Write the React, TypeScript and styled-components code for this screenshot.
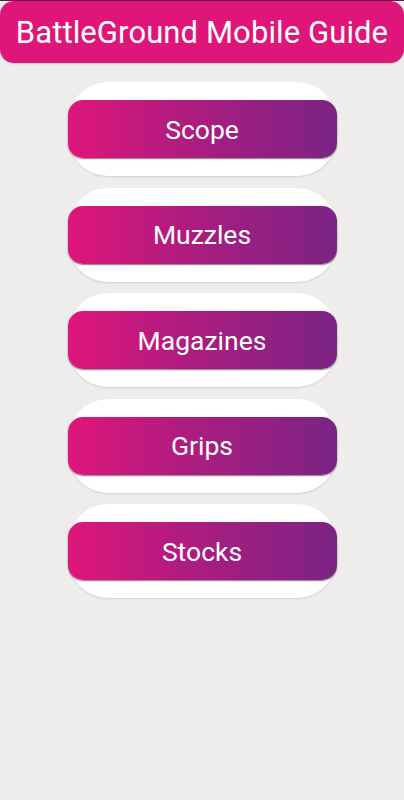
import React from "react";
import styled, { createGlobalStyle } from "styled-components";

const GlobalStyle = createGlobalStyle`
  html, body {
    margin: 0;
    padding: 0;
    background: #eeedeb;
  }
  body {
    font-family: Roboto, "Noto Sans", Arial, sans-serif;
  }
`;

const Page = styled.div`
  width: 404px;
  min-height: 800px;
  background: #eeedeb;
  border-top: 1px solid #6b1447;
  box-sizing: border-box;
  display: flex;
  flex-direction: column;
`;

const Header = styled.header`
  height: 62px;
  background: #e0157a;
  border-radius: 14px;
  display: flex;
  align-items: center;
  justify-content: center;
  box-shadow: 0 1px 2px rgba(0, 0, 0, 0.15);
`;

const Title = styled.h1`
  margin: 0;
  color: #ffffff;
  font-family: Roboto, sans-serif;
  font-weight: 400;
  font-size: 31px;
  letter-spacing: 0.1px;
`;

const List = styled.div`
  display: flex;
  flex-direction: column;
  align-items: center;
  gap: 11.5px;
  padding-top: 19px;
`;

const Card = styled.div`
  width: 269px;
  height: 94px;
  background: #ffffff;
  border-radius: 40px;
  display: flex;
  align-items: center;
  box-shadow: 0 1px 2px rgba(0, 0, 0, 0.12);
`;

const GradientButton = styled.button`
  width: 100%;
  height: 58px;
  border: none;
  border-radius: 15px;
  background: linear-gradient(90deg, #e0157a 0%, #a81d80 50%, #7a2484 100%);
  color: #ffffff;
  font-family: Roboto, sans-serif;
  font-size: 26.5px;
  font-weight: 400;
  padding: 0;
  display: flex;
  align-items: center;
  justify-content: center;
  box-shadow: 0 1px 1.5px rgba(40, 0, 30, 0.55);
  cursor: pointer;
`;

const items = ["Scope", "Muzzles", "Magazines", "Grips", "Stocks"];

export default function App() {
  return (
    <>
      <GlobalStyle />
      <Page>
        <Header>
          <Title>BattleGround Mobile Guide</Title>
        </Header>
        <List>
          {items.map((label) => (
            <Card key={label}>
              <GradientButton>{label}</GradientButton>
            </Card>
          ))}
        </List>
      </Page>
    </>
  );
}
